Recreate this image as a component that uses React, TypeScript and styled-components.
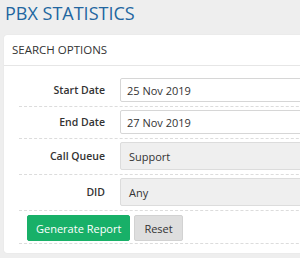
import React from 'react';
import styled, { createGlobalStyle } from 'styled-components';

const GlobalStyle = createGlobalStyle`
  html, body {
    margin: 0;
    padding: 0;
    background: #eeeeee;
    font-family: 'Open Sans', 'Noto Sans', sans-serif;
    color: #333;
  }
`;

const Page = styled.div`
  width: 300px;
  height: 258px;
  overflow: hidden;
  padding: 1px 0 0 4px;
  box-sizing: border-box;
`;

const Title = styled.h1`
  margin: 0 0 10px 1px;
  font-size: 18px;
  line-height: 24px;
  font-weight: 400;
  color: #2266a0;
`;

const Card = styled.section`
  width: 320px;
  background: #fff;
  border-radius: 3px;
  box-shadow: 0 0 1px rgba(0, 0, 0, 0.12);
`;

const CardHeader = styled.div`
  padding: 7px 8px 8px;
  font-size: 11.5px;
  line-height: 15px;
  text-transform: uppercase;
  border-bottom: 1px solid #e6e6e6;
`;

const CardBody = styled.form`
  padding: 9px 0 9px 15px;
`;

const Row = styled.div`
  display: grid;
  grid-template-columns: 86px 1fr;
  column-gap: 15px;
  align-items: center;
  padding: 3px 0 4px;
  border-bottom: 1px dashed #dcdcdc;
`;

const Label = styled.label`
  text-align: right;
  font-size: 10.5px;
  font-weight: 600;
`;

const Field = styled.div<{ $select?: boolean }>`
  height: ${p => (p.$select ? 28 : 24)}px;
  box-sizing: border-box;
  display: flex;
  align-items: center;
  padding-left: ${p => (p.$select ? 8 : 6)}px;
  font-size: 11px;
  border: 1px solid ${p => (p.$select ? '#dcdcdc' : '#d6d6d6')};
  border-radius: 2px;
  background: ${p => (p.$select ? '#efefef' : '#fff')};
`;

const Actions = styled.div`
  display: flex;
  gap: 4px;
  padding: 4px 0 2px 8px;
  border-bottom: 1px dashed #dcdcdc;
`;

const Button = styled.button<{ $primary?: boolean }>`
  height: 26px;
  padding: 0 ${p => (p.$primary ? 8 : 9)}px;
  font-family: inherit;
  font-size: 11px;
  border-radius: 2px;
  border: 1px solid ${p => (p.$primary ? '#18b068' : '#d2d2d2')};
  background: ${p => (p.$primary ? '#18b068' : '#dedede')};
  color: ${p => (p.$primary ? '#fff' : '#333')};
`;

const fields = [
  { label: 'Start Date', value: '25 Nov 2019' },
  { label: 'End Date', value: '27 Nov 2019' },
  { label: 'Call Queue', value: 'Support', select: true },
  { label: 'DID', value: 'Any', select: true },
];

export default function App() {
  return (
    <Page>
      <GlobalStyle />
      <Title>PBX STATISTICS</Title>
      <Card>
        <CardHeader>Search Options</CardHeader>
        <CardBody>
          {fields.map(f => (
            <Row key={f.label}>
              <Label>{f.label}</Label>
              <Field $select={f.select}>{f.value}</Field>
            </Row>
          ))}
          <Actions>
            <Button type="button" $primary>
              Generate Report
            </Button>
            <Button type="button">Reset</Button>
          </Actions>
        </CardBody>
      </Card>
    </Page>
  );
}
